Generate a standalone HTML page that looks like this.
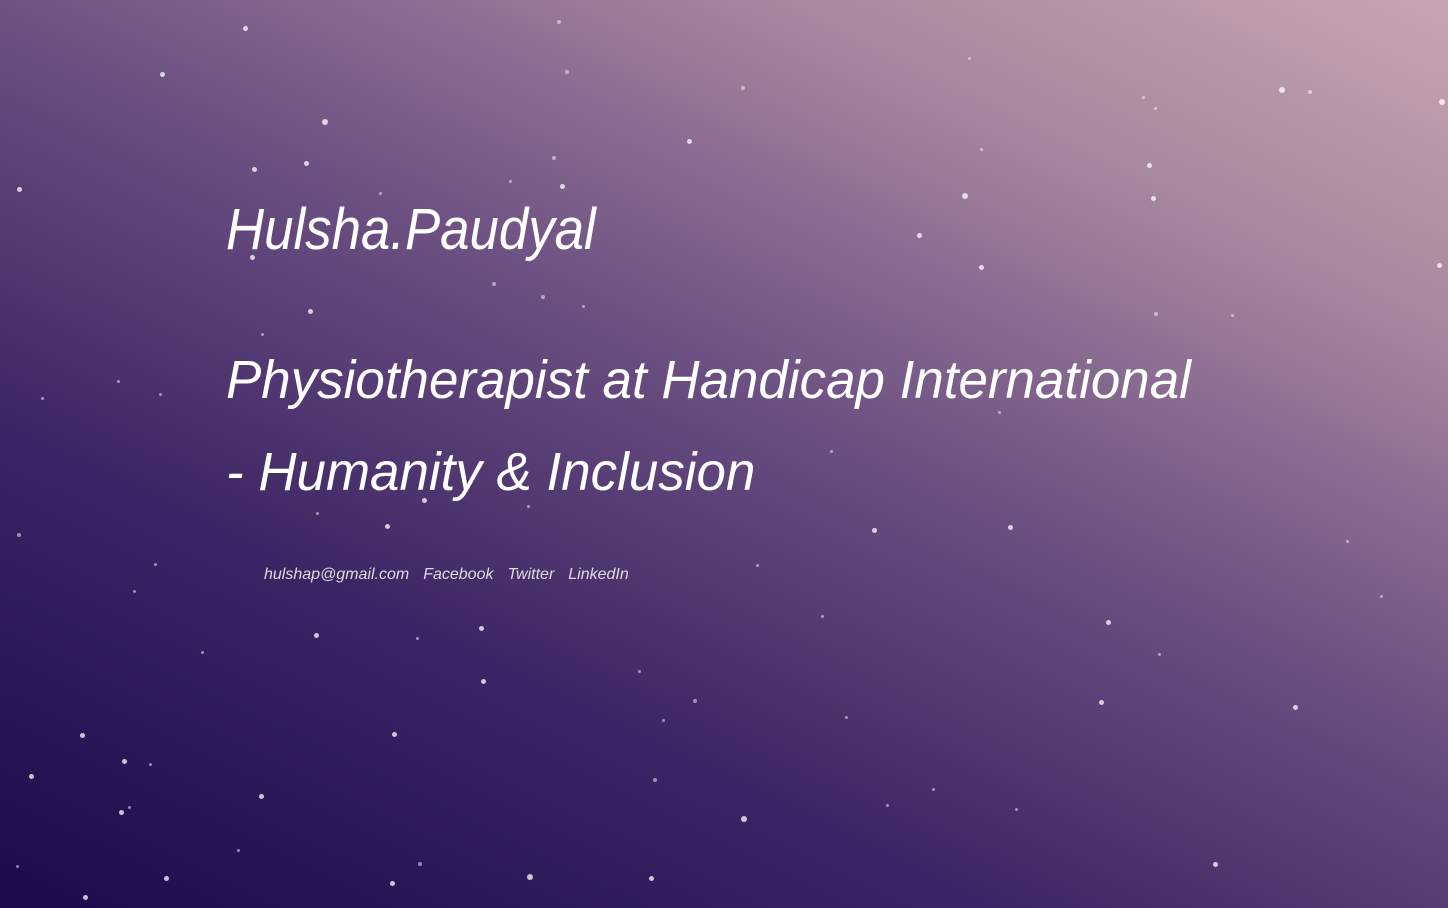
<!DOCTYPE html>
<html><head><meta charset="utf-8"><style>
html,body{margin:0;padding:0;width:1448px;height:908px;overflow:hidden}
body{background:linear-gradient(26deg,#1c0a4c 0%,#3c2564 30%,#6c5082 55%,#a8889f 80%,#c8a4b4 100%);position:relative;font-family:"Liberation Sans",sans-serif;color:#fff}
.s{position:absolute;border-radius:50%;background:#fff}
h1{position:absolute;left:226px;top:196px;margin:0;font-size:58px;font-style:italic;font-weight:normal;transform:scaleX(0.91);transform-origin:left;white-space:nowrap}
h2{position:absolute;left:226px;top:334px;margin:0;font-size:54px;font-style:italic;font-weight:normal;line-height:92px;transform:scaleX(0.98);transform-origin:left;width:1200px;white-space:nowrap}
.l{position:absolute;left:264px;top:566px;font-size:16px;font-style:italic;color:#ddd;white-space:nowrap}
.l span{margin-right:14px}
</style></head><body>
<h1>Hulsha.Paudyal</h1>
<h2>Physiotherapist at Handicap International<br>- Humanity &amp; Inclusion</h2>
<div class="l"><span>hulshap@gmail.com</span><span>Facebook</span><span>Twitter</span><span>LinkedIn</span></div>
<div id="st"></div>
<script>
var p=[[559,22,4],[245,28,5],[162,74,5],[567,72,4],[743,88,4],[1282,90,6],[1310,92,4],[1442,102,6],[325,122,6],[689,141,5],[254,169,5],[306,163,5],[554,158,4],[1149,165,5],[510,181,3],[19,189,5],[380,193,3],[562,186,5],[965,196,6],[1153,198,5],[919,235,5],[981,267,5],[1439,265,5],[252,257,5],[543,297,4],[310,311,5],[494,284,4],[1156,314,4],[583,306,3],[262,334,3],[118,381,3],[160,394,3],[42,398,3],[831,451,3],[1010,527,5],[874,530,5],[387,526,5],[424,500,5],[19,535,4],[1347,541,3],[757,565,3],[134,591,3],[1108,622,5],[481,628,5],[316,635,5],[1159,654,3],[483,681,5],[1101,702,5],[1295,707,5],[846,717,3],[82,735,5],[394,734,5],[150,764,3],[31,776,5],[655,780,4],[933,789,3],[261,796,5],[887,805,3],[129,807,3],[121,812,5],[744,819,6],[17,866,3],[420,864,4],[1215,864,5],[166,878,5],[530,877,6],[651,878,5],[392,883,5],[85,897,5],[1155,108,3],[1143,97,3],[969,58,3],[981,149,3],[1232,315,3],[999,412,3],[1381,596,3],[822,616,3],[695,701,4],[663,720,3],[639,671,3],[1016,809,3],[238,850,3],[124,761,5],[202,652,3],[155,564,3],[417,638,3],[317,513,3],[528,506,3]];
var h='';p.forEach(function(a){h+='<div class="s" style="left:'+(a[0]-a[2]/2)+'px;top:'+(a[1]-a[2]/2)+'px;width:'+a[2]+'px;height:'+a[2]+'px;opacity:'+(a[2]>4?0.75:0.5)+'"></div>'});document.getElementById('st').innerHTML=h;
</script>
</body></html>
